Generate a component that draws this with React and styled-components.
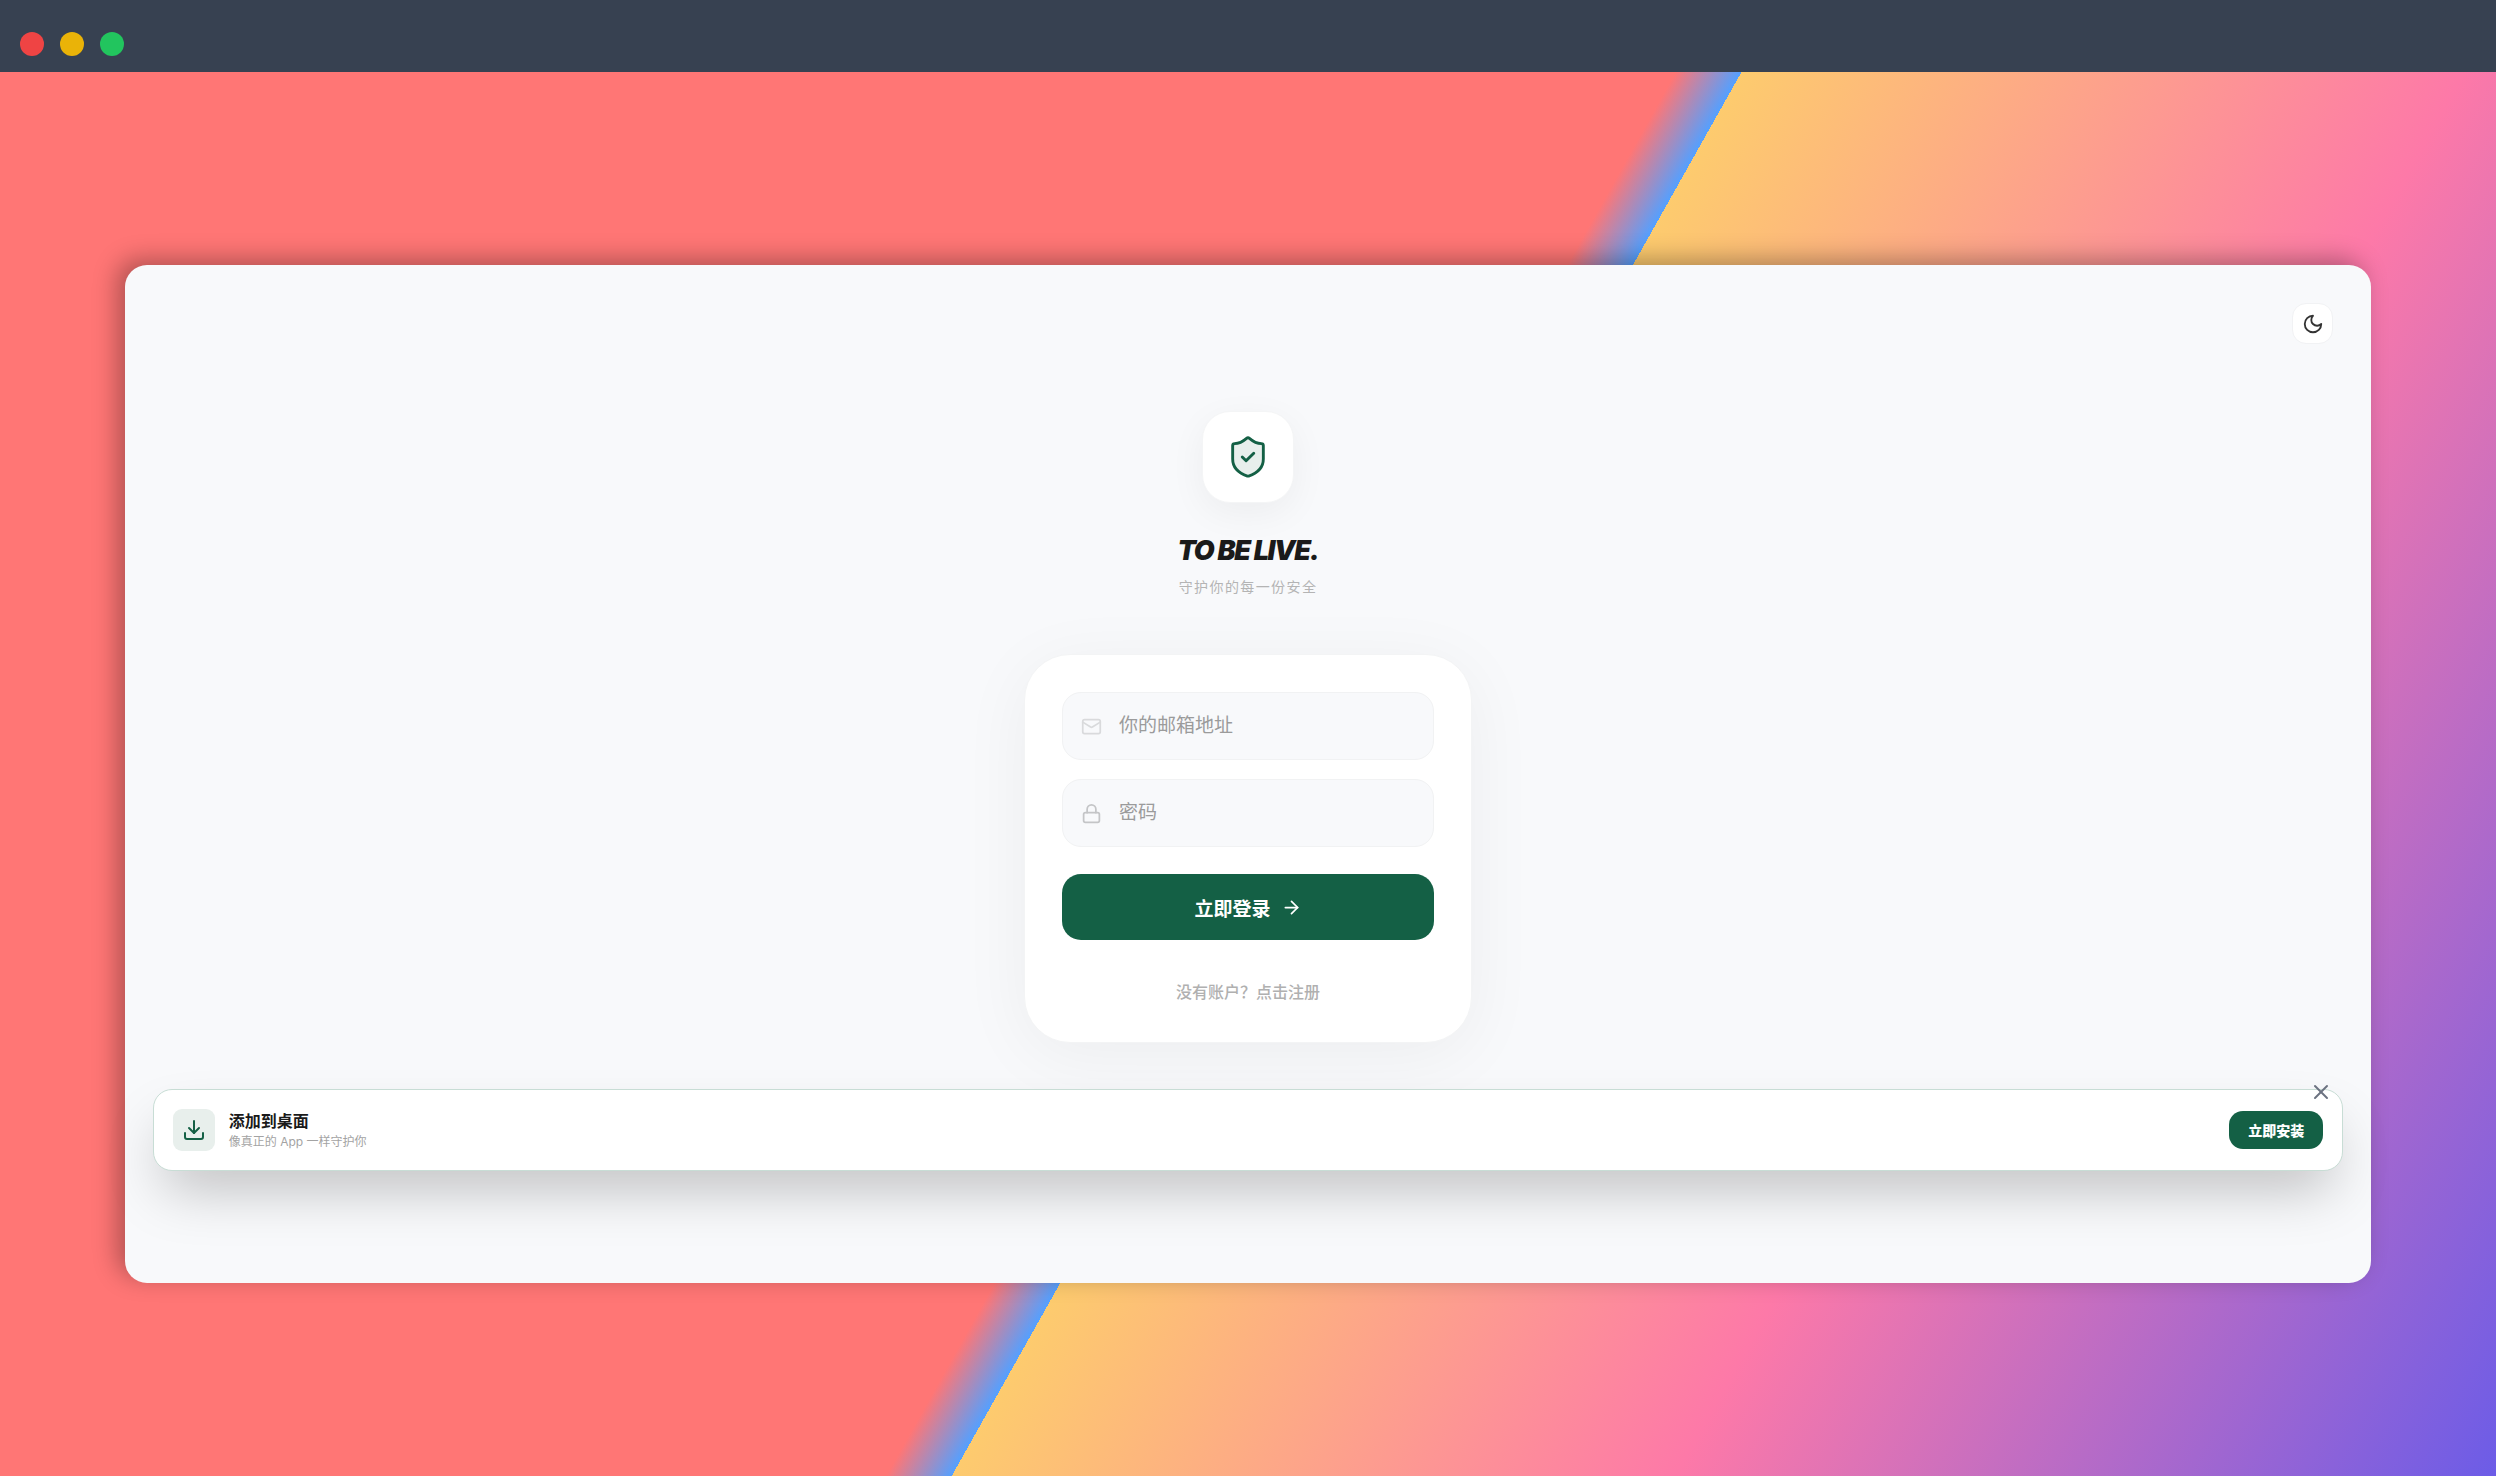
import React, { useState } from 'react';
import styled, { createGlobalStyle } from 'styled-components';
import { ArrowRight, Download, Lock, X } from 'lucide-react';

const GlobalStyle = createGlobalStyle`
  *, *::before, *::after {
    box-sizing: border-box;
  }

  body {
    margin: 0;
    font-family: Inter, 'Noto Sans CJK SC', sans-serif;
    color: #1a1a1a;
  }

  button, input {
    font-family: inherit;
  }
`;

const Page = styled.div`
  display: flex;
  flex-direction: column;
  min-height: 100vh;
`;

const TitleBar = styled.header`
  display: flex;
  align-items: center;
  gap: 16px;
  height: 72px;
  padding: 16px 20px 0;
  background: #374151;
`;

const Dot = styled.span`
  width: 24px;
  height: 24px;
  border-radius: 50%;
  background: ${(props) => props.color};
`;

const Stage = styled.main`
  flex: 1;
  display: flex;
  align-items: center;
  padding: 48px 5%;
  background: linear-gradient(
    119.36deg,
    #ff7675 51%,
    #54a0ff 53%,
    #fdcb6e 53%,
    #fd79a8 75%,
    #6c5ce7
  );
`;

const Panel = styled.div`
  flex: 1;
  display: flex;
  flex-direction: column;
  padding-bottom: 112px;
  border-radius: 22px;
  background: #f8f9fb;
  box-shadow: -8px -6px 24px rgba(0, 0, 0, 0.3);
`;

const TopRow = styled.div`
  display: flex;
  justify-content: flex-end;
  padding: 38px 38px 0;
`;

const ThemeButton = styled.button`
  display: grid;
  place-items: center;
  width: 41px;
  height: 41px;
  padding: 0;
  border: 1px solid #f1f2f4;
  border-radius: 14px;
  background: #fff;
  color: #333;
`;

const Content = styled.div`
  display: flex;
  flex-direction: column;
  align-items: center;
  padding: 67px 0 46px;
`;

const LogoTile = styled.div`
  display: grid;
  place-items: center;
  width: 92px;
  height: 92px;
  border: 1px solid #f4f5f6;
  border-radius: 28px;
  background: #fff;
  color: #146045;
  box-shadow: 0 10px 36px rgba(0, 0, 0, 0.05);
`;

const Title = styled.h1`
  margin: 28px 0 0;
  font-size: 27px;
  line-height: 40px;
  font-weight: 900;
  font-style: italic;
  letter-spacing: -0.05em;
`;

const Tagline = styled.p`
  margin: 6px 0 0;
  color: #b4b4b4;
  font-size: 14px;
  line-height: 20px;
  letter-spacing: 0.1em;
`;

const Card = styled.form`
  display: flex;
  flex-direction: column;
  width: 448px;
  margin-top: 57px;
  padding: 37px 37px 38px;
  border: 1px solid #f3f4f5;
  border-radius: 46px;
  background: #fff;
  box-shadow: 0 12px 70px rgba(0, 0, 0, 0.05);
`;

const Field = styled.label`
  display: flex;
  align-items: center;
  gap: 17px;
  height: 68px;
  margin-bottom: 19px;
  padding: 0 18px;
  border: 1px solid #f1f2f3;
  border-radius: 19px;
  background: #f8f9fb;
  color: ${(props) => props.$tone};

  svg {
    flex: none;
  }
`;

const Input = styled.input`
  flex: 1;
  min-width: 0;
  padding: 0;
  border: 0;
  outline: 0;
  background: transparent;
  color: #1a1a1a;
  font-size: 19px;
  line-height: 28px;

  &::placeholder {
    color: #9b9b9b;
    opacity: 1;
  }
`;

const SubmitButton = styled.button`
  display: flex;
  align-items: center;
  justify-content: center;
  gap: 10px;
  height: 66px;
  margin-top: 8px;
  border: 0;
  border-radius: 19px;
  background: #146045;
  color: #fff;
  font-size: 19px;
  font-weight: 700;
`;

const RegisterLink = styled.a`
  align-self: center;
  margin-top: 40px;
  color: #b0b0b0;
  font-size: 16px;
  line-height: 24px;
  font-weight: 500;
  text-decoration: none;
`;

const Banner = styled.section`
  display: flex;
  align-items: center;
  gap: 14px;
  position: relative;
  height: 82px;
  margin: 0 28px;
  padding: 0 19px;
  border: 1px solid #c8ddd5;
  border-radius: 19px;
  background: #fff;
  box-shadow: 0 28px 56px -12px rgba(0, 0, 0, 0.25);
`;

const BannerIcon = styled.div`
  display: grid;
  place-items: center;
  width: 42px;
  height: 42px;
  border-radius: 9px;
  background: #e8efec;
  color: #146045;
`;

const BannerText = styled.div`
  flex: 1;
`;

const BannerTitle = styled.h2`
  margin: 0;
  font-size: 16px;
  line-height: 24px;
  font-weight: 700;
`;

const BannerNote = styled.p`
  margin: 0;
  color: #a3a3a3;
  font-size: 12px;
  line-height: 18px;
`;

const InstallButton = styled.button`
  height: 38px;
  padding: 0 19px;
  border: 0;
  border-radius: 14px;
  background: #146045;
  color: #fff;
  font-size: 14px;
  font-weight: 900;
`;

const CloseButton = styled.button`
  display: grid;
  place-items: center;
  position: absolute;
  top: -10px;
  right: 9px;
  width: 24px;
  height: 24px;
  padding: 0;
  border: 0;
  background: transparent;
  color: #6b7280;
`;

const Icon = ({ size, weight = 2, children }) => (
  <svg
    width={size}
    height={size}
    viewBox='0 0 24 24'
    fill='none'
    stroke='currentColor'
    strokeWidth={weight}
    strokeLinecap='round'
    strokeLinejoin='round'
    aria-hidden='true'
  >
    {children}
  </svg>
);

const App = () => {
  const [email, setEmail] = useState('');
  const [password, setPassword] = useState('');
  const [showBanner, setShowBanner] = useState(true);

  return (
    <Page>
      <GlobalStyle />
      <TitleBar>
        <Dot color='#ef4444' />
        <Dot color='#eab308' />
        <Dot color='#22c55e' />
      </TitleBar>
      <Stage>
        <Panel>
          <TopRow>
            <ThemeButton type='button' aria-label='切换主题'>
              <Icon size={22}>
                <path d='M12 3a6 6 0 0 0 9 9 9 9 0 1 1-9-9Z' />
              </Icon>
            </ThemeButton>
          </TopRow>

          <Content>
            <LogoTile>
              <Icon size={46} weight={1.5}>
                <path
                  d='M20 13c0 5-3.5 7.5-7.66 8.95a1 1 0 0 1-.67-.01C7.5 20.5 4 18 4 13V6a1 1 0 0 1 1-1c2 0 4.5-1.2 6.24-2.72a1.17 1.17 0 0 1 1.52 0C14.51 3.81 17 5 19 5a1 1 0 0 1 1 1z'
                  fill='#e8efec'
                />
                <path d='m9 12 2 2 4-4' />
              </Icon>
            </LogoTile>
            <Title>TO BE LIVE.</Title>
            <Tagline>守护你的每一份安全</Tagline>

            <Card onSubmit={(e) => e.preventDefault()}>
              <Field $tone='#d9dadc'>
                <Icon size={21}>
                  <rect x='2' y='4' width='20' height='16' rx='2' />
                  <path d='m22 7-8.97 5.7a1.94 1.94 0 0 1-2.06 0L2 7' />
                </Icon>
                <Input
                  type='email'
                  aria-label='邮箱'
                  placeholder='你的邮箱地址'
                  value={email}
                  onChange={(e) => setEmail(e.target.value)}
                />
              </Field>
              <Field $tone='#c4c5c7'>
                <Lock size={21} />
                <Input
                  type='password'
                  aria-label='密码'
                  placeholder='密码'
                  value={password}
                  onChange={(e) => setPassword(e.target.value)}
                />
              </Field>
              <SubmitButton type='submit'>
                立即登录
                <ArrowRight size={21} />
              </SubmitButton>
              <RegisterLink href='#register'>没有账户？点击注册</RegisterLink>
            </Card>
          </Content>

          {showBanner && (
            <Banner>
              <BannerIcon>
                <Download size={24} />
              </BannerIcon>
              <BannerText>
                <BannerTitle>添加到桌面</BannerTitle>
                <BannerNote>像真正的 App 一样守护你</BannerNote>
              </BannerText>
              <InstallButton type='button'>立即安装</InstallButton>
              <CloseButton
                type='button'
                aria-label='关闭'
                onClick={() => setShowBanner(false)}
              >
                <X size={24} />
              </CloseButton>
            </Banner>
          )}
        </Panel>
      </Stage>
    </Page>
  );
};

export default App;
